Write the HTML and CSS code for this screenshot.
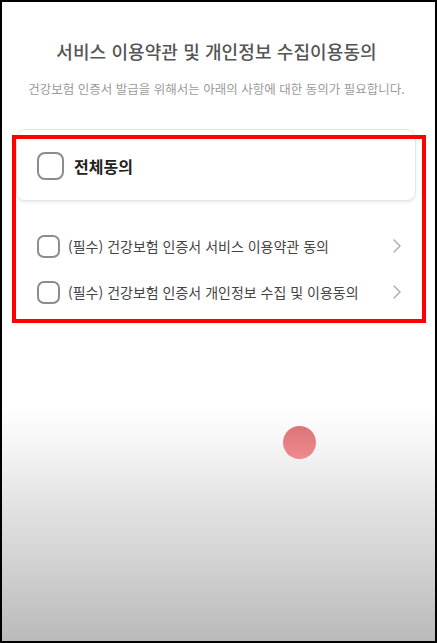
FILE: index.html
```html
<!DOCTYPE html>
<html lang="ko">
<head>
<meta charset="utf-8">
<link rel="stylesheet" href="styles.css">
</head>
<body>
<div class="frame">
  <div class="header">
    <h1 class="title">서비스 이용약관 및 개인정보 수집이용동의</h1>
    <p class="subtitle">건강보험 인증서 발급을 위해서는 아래의 사항에 대한 동의가 필요합니다.</p>
  </div>
  <div class="agree">
    <div class="card">
      <span class="box box-lg"></span>
      <span class="all-label">전체동의</span>
    </div>
    <ul class="rows">
      <li class="row">
        <span class="box"></span>
        <span class="row-label">(필수) 건강보험 인증서 서비스 이용약관 동의</span>
        <svg class="chev" width="10" height="14" viewBox="0 0 10 14"><polyline points="2,1 8,7 2,13" fill="none" stroke="#b0b0b0" stroke-width="1.5" stroke-linecap="round" stroke-linejoin="round"/></svg>
      </li>
      <li class="row">
        <span class="box"></span>
        <span class="row-label">(필수) 건강보험 인증서 개인정보 수집 및 이용동의</span>
        <svg class="chev" width="10" height="14" viewBox="0 0 10 14"><polyline points="2,1 8,7 2,13" fill="none" stroke="#b0b0b0" stroke-width="1.5" stroke-linecap="round" stroke-linejoin="round"/></svg>
      </li>
    </ul>
  </div>
  <div class="highlight"></div>
  <div class="touch"></div>
</div>
</body>
</html>
```

FILE: styles.css
```css
* { box-sizing: border-box; }
html, body { margin: 0; padding: 0; }
body {
  font-family: "Noto Sans CJK KR", "Noto Sans", sans-serif;
  background: #000;
}
.frame {
  position: relative;
  width: 437px;
  height: 643px;
  border: 2px solid #000;
  overflow: hidden;
  background: linear-gradient(to bottom,
    #ffffff 0%,
    #ffffff 63%,
    #f4f4f4 70%,
    #e0e0e0 80%,
    #d0d0d0 89%,
    #bababa 100%);
}
.header {
  padding: 36px 4px 0 0;
  text-align: center;
}
.title {
  margin: 0;
  font-size: 18px;
  line-height: 26px;
  font-weight: 500;
  color: #555;
  letter-spacing: 0.1px;
}
.subtitle {
  margin: 16px 0 0;
  font-size: 12.5px;
  line-height: 18px;
  color: #9a9a9a;
}
.agree {
  margin: 31px 19px 0 14px;
}
.card {
  height: 72px;
  display: flex;
  align-items: center;
  gap: 10px;
  padding-left: 20px;
  border: 1px solid #e4e4e4;
  border-radius: 9px;
  background: #fff;
  box-shadow: 0 2px 3px rgba(0,0,0,0.07);
}
.box {
  flex: none;
  width: 23px;
  height: 23px;
  border: 2px solid #8c8c8c;
  border-radius: 7px;
  background: #fff;
}
.box-lg {
  width: 27px;
  height: 28px;
  border-radius: 8px;
  margin-top: 1px;
}
.all-label {
  font-size: 16px;
  font-weight: 700;
  color: #222;
  line-height: 22px;
  margin-top: 2px;
}
.rows {
  list-style: none;
  margin: 22px 0 0;
  padding: 0;
}
.row {
  height: 46px;
  display: flex;
  align-items: center;
  gap: 8px;
  padding: 0 14px 0 21px;
}
.row-label {
  flex: 1;
  font-size: 14px;
  line-height: 20px;
  color: #444;
}
.chev {
  flex: none;
  display: block;
}
.highlight {
  position: absolute;
  left: 10px;
  top: 133px;
  width: 414px;
  height: 188px;
  border: 4px solid #ff0000;
}
.touch {
  position: absolute;
  left: 281px;
  top: 424px;
  width: 33px;
  height: 33px;
  border-radius: 50%;
  background: linear-gradient(to bottom, #d97478, #f08a8e);
}
```
